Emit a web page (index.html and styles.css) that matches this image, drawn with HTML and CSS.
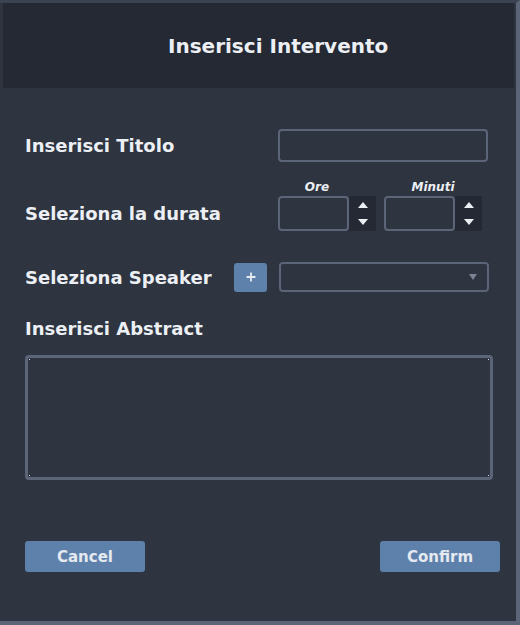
FILE: index.html
```html
<!DOCTYPE html>
<html lang="it">
<head>
<meta charset="utf-8">
<title>Inserisci Intervento</title>
<link rel="stylesheet" href="styles.css">
</head>
<body>
<div class="window">
  <header class="header">
    <h1 class="title">Inserisci Intervento</h1>
  </header>
  <main class="content">
    <div class="row row-title">
      <label class="label label-wide">Inserisci Titolo</label>
      <div class="field field-title"></div>
    </div>
    <div class="row row-duration">
      <label class="label label-wide label-tall">Seleziona la durata</label>
      <div class="spinner-group">
        <div class="caption">Ore</div>
        <div class="spinner">
          <div class="field field-spin"></div>
          <div class="arrows">
            <span class="tri tri-up"></span>
            <span class="tri tri-down"></span>
          </div>
        </div>
      </div>
      <div class="spinner-group">
        <div class="caption caption-wide">Minuti</div>
        <div class="spinner">
          <div class="field field-spin"></div>
          <div class="arrows">
            <span class="tri tri-up"></span>
            <span class="tri tri-down"></span>
          </div>
        </div>
      </div>
    </div>
    <div class="row row-speaker">
      <label class="label label-speaker">Seleziona Speaker</label>
      <button class="plus-btn" type="button" aria-label="Aggiungi">
        <svg width="12" height="12" viewBox="0 0 12 12"><path d="M6 1.5V10.5M1.5 6H10.5" stroke="#e5e9f0" stroke-width="1.8" fill="none"/></svg>
      </button>
      <div class="field field-select"><span class="select-arrow"></span></div>
    </div>
    <div class="label abstract-label">Inserisci Abstract</div>
    <div class="field textarea">
      <span class="dot dot-tl"></span><span class="dot dot-tr"></span>
      <span class="dot dot-bl"></span><span class="dot dot-br"></span>
    </div>
    <div class="actions">
      <button class="btn" type="button">Cancel</button>
      <button class="btn" type="button">Confirm</button>
    </div>
  </main>
</div>
</body>
</html>
```
FILE: styles.css
```css
* { box-sizing: border-box; }
html, body { margin: 0; padding: 0; }
body {
  background: #2e3440;
  font-family: "DejaVu Sans", "Liberation Sans", sans-serif;
  color: #eceff4;
}
.window {
  width: 520px;
  height: 625px;
  background: #2e3440;
  border-top: 3px solid #3b4252;
  border-right: 4px solid #5c6577;
  border-bottom: 4px solid #5c6577;
  display: flex;
  flex-direction: column;
}
.header {
  margin: 0 2px 0 3px;
  height: 85px;
  background: #242933;
  display: flex;
  align-items: center;
  padding-left: 165px;
}
.title {
  margin: 0;
  font-size: 20px;
  font-weight: bold;
  color: #eceff4;
}
.content {
  padding: 41px 0 0 25px;
  display: flex;
  flex-direction: column;
}
.row {
  display: flex;
}
.label {
  font-size: 18px;
  font-weight: bold;
  color: #eceff4;
  white-space: nowrap;
}
.label-wide {
  width: 253px;
  display: flex;
  align-items: center;
}
.field {
  border: 2px solid #5c6577;
  border-radius: 4px;
  background: #2e3440;
}
.row-title { height: 33px; align-items: center; }
.field-title { width: 210px; height: 33px; }

.row-duration {
  margin-top: 18px;
  align-items: flex-end;
}
.label-tall { height: 35px; }
.spinner-group {
  display: flex;
  flex-direction: column;
  margin-right: 8px;
}
.caption {
  width: 78px;
  text-align: center;
  font-size: 12px;
  font-weight: bold;
  font-style: italic;
  height: 16px;
  line-height: 14px;
}
.caption-wide { width: 98px; }
.spinner { display: flex; height: 35px; }
.field-spin { width: 71px; height: 35px; }
.arrows {
  width: 27px;
  background: #242933;
  display: flex;
  flex-direction: column;
  align-items: center;
  justify-content: center;
  gap: 11px;
}
.tri {
  width: 0;
  height: 0;
  border-left: 5px solid transparent;
  border-right: 5px solid transparent;
}
.tri-up { border-bottom: 6px solid #eceff4; }
.tri-down { border-top: 6px solid #eceff4; }

.row-speaker {
  margin-top: 31px;
  height: 30px;
  align-items: center;
}
.label-speaker { width: 209px; }
.plus-btn {
  width: 33px;
  height: 29px;
  border: none;
  border-radius: 3px;
  background: #5e81ac;
  padding: 0;
  display: flex;
  align-items: center;
  justify-content: center;
  margin-right: 12px;
}
.field-select {
  width: 210px;
  height: 30px;
  display: flex;
  align-items: center;
  justify-content: flex-end;
  padding-right: 10px;
}
.select-arrow {
  width: 0;
  height: 0;
  border-left: 4px solid transparent;
  border-right: 4px solid transparent;
  border-top: 6px solid #7b8394;
}
.abstract-label {
  height: 40px;
  line-height: 40px;
  margin-top: 17px;
}
.textarea {
  position: relative;
  margin-top: 6px;
  width: 468px;
  height: 125px;
  border-width: 3px;
}
.dot {
  position: absolute;
  width: 1px;
  height: 1px;
  background: #d8dee9;
}
.dot-tl { top: 1px; left: 1px; }
.dot-tr { top: 1px; right: 1px; }
.dot-bl { bottom: 1px; left: 1px; }
.dot-br { bottom: 1px; right: 1px; }
.actions {
  margin-top: 61px;
  width: 475px;
  display: flex;
  justify-content: space-between;
}
.btn {
  width: 120px;
  height: 31px;
  border: none;
  border-radius: 3px;
  background: #5e81ac;
  color: #e5e9f0;
  font-family: "DejaVu Sans", "Liberation Sans", sans-serif;
  font-size: 15px;
  font-weight: bold;
  padding: 0;
}
```
